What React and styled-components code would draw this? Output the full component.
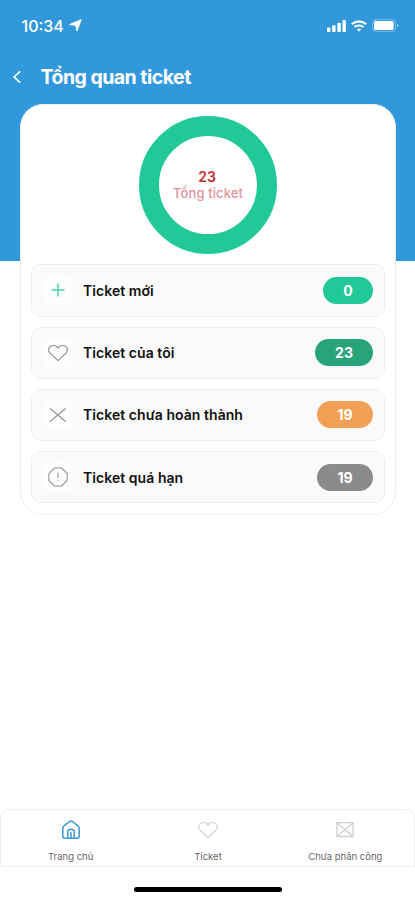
import React from "react";
import styled, { createGlobalStyle } from "styled-components";

const GlobalStyle = createGlobalStyle`
	* {
		box-sizing: border-box;
	}

	body {
		margin: 0;
		background: #fff;
		font-family: Inter, "Liberation Sans", sans-serif;
	}
`;

const Screen = styled.div`
	display: flex;
	flex-direction: column;
	height: 900px;
	overflow: hidden;
	background: #fff;
`;

const Header = styled.header`
	flex: none;
	height: 261px;
	background: #3298dc;
	color: #fff;
`;

const StatusBar = styled.div`
	display: flex;
	align-items: center;
	justify-content: space-between;
	height: 51px;
	padding: 0 16px 0 21.5px;
`;

const StatusGroup = styled.div`
	display: flex;
	align-items: center;
	gap: ${(props) => props.$gap}px;
`;

const Time = styled.span`
	font-size: 16px;
	font-weight: 500;
`;

const TitleBar = styled.div`
	display: flex;
	align-items: center;
	gap: 18.5px;
	height: 51px;
	padding-left: 12px;
`;

const Title = styled.h1`
	margin: 0;
	font-size: 19.5px;
	font-weight: 650;
	letter-spacing: -0.52px;
	white-space: nowrap;
`;

const Card = styled.main`
	flex: none;
	display: flex;
	flex-direction: column;
	align-items: center;
	height: 411px;
	margin: -157px 19px 0 20px;
	padding: 11px 10px 0;
	border: 1px solid #efefef;
	border-radius: 23px;
	background: #fff;
`;

const Donut = styled.div`
	display: flex;
	flex-direction: column;
	align-items: center;
	justify-content: center;
	width: 138px;
	height: 138px;
	border: 20px solid #20c997;
	border-radius: 50%;
	white-space: nowrap;
`;

const Total = styled.div`
	margin-right: 2px;
	font-size: 14px;
	font-weight: 600;
	line-height: 17px;
	color: #c9292f;
`;

const TotalLabel = styled.div`
	font-size: 13px;
	font-weight: 500;
	letter-spacing: 0.12px;
	line-height: 17px;
	color: #e0949a;
`;

const List = styled.div`
	display: flex;
	flex-direction: column;
	gap: 10px;
	width: 354px;
	margin-top: 10.4px;
`;

const Row = styled.div`
	display: flex;
	align-items: center;
	height: 52.2px;
	padding: 0 11px 0 10.5px;
	border: 1px solid #eeeeee;
	border-radius: 10px;
	background: #fafafa;
`;

const IconBox = styled.div`
	display: flex;
	align-items: center;
	justify-content: center;
	width: 30px;
	height: 30px;
	border-radius: 8px;
	background: #fdfdfd;
	color: ${(props) => props.$color};
`;

const RowLabel = styled.span`
	flex: 1;
	margin-left: 10.5px;
	font-size: 14px;
	font-weight: 600;
	letter-spacing: 0.05px;
	color: #111;
`;

const Badge = styled.span`
	width: ${(props) => props.$width}px;
	height: 27px;
	border-radius: 14px;
	background: ${(props) => props.$color};
	color: #fff;
	font-size: 14px;
	font-weight: 700;
	line-height: 27px;
	text-align: center;
`;

const Nav = styled.nav`
	flex: none;
	display: flex;
	height: 58px;
	margin-top: auto;
	padding-left: 1px;
	border: 1px solid #ededed;
	border-radius: 9px 9px 0 0;
`;

const NavItem = styled.div`
	flex: 1;
	display: flex;
	flex-direction: column;
	align-items: center;
	padding-top: 10px;
	color: ${(props) => props.$color};
`;

const NavLabel = styled.span`
	margin-top: 10px;
	font-size: 9.5px;
	line-height: 14px;
	color: #666;
`;

const HomeArea = styled.div`
	flex: none;
	display: flex;
	justify-content: center;
	height: 33px;
	padding-top: 20px;
`;

const HomeBar = styled.div`
	width: 148px;
	height: 5px;
	border-radius: 3px;
	background: #000;
`;

const Svg = ({ size = 20, width = size, height = size, stroke = 1.3, box = "0 0 20 20", children }) => (
	<svg
		width={width}
		height={height}
		viewBox={box}
		fill="none"
		stroke="currentColor"
		strokeWidth={stroke}
		strokeLinecap="round"
		strokeLinejoin="round"
	>
		{children}
	</svg>
);

const LocationIcon = () => (
	<Svg width={13} height={13} box="0 0 13 13" stroke={1}>
		<path d="M12 1 8 12 6.8 6.4 1 5.6Z" fill="currentColor" />
	</Svg>
);

const SignalIcon = () => (
	<Svg width={19} height={12} box="0 0 19 12" stroke={0}>
		<g fill="currentColor">
			<rect x="0" y="7.5" width="3.4" height="4.5" rx="0.8" />
			<rect x="5.2" y="5.3" width="3.4" height="6.7" rx="0.8" />
			<rect x="10.4" y="2.8" width="3.4" height="9.2" rx="0.8" />
			<rect x="15.5" y="0" width="3.4" height="12" rx="0.8" />
		</g>
	</Svg>
);

const WifiIcon = () => (
	<Svg width={16} height={12} box="0 0 16 12" stroke={2}>
		<g strokeLinecap="butt">
			<path d="M.8 4.3C4.9.4 11.1.4 15.2 4.3" />
			<path d="M3.4 7.1C6 4.8 10 4.8 12.6 7.1" />
		</g>
		<path d="M8 11.6 5.8 9.4Q8 7.6 10.2 9.4Z" fill="currentColor" stroke="none" />
	</Svg>
);

const BatteryIcon = () => (
	<Svg width={27} height={13} box="0 0 27 13" stroke={1}>
		<rect x="0.6" y="0.6" width="22.8" height="11.8" rx="3" opacity="0.35" />
		<rect x="2" y="2" width="19.6" height="9" rx="1.6" fill="currentColor" stroke="none" />
		<path d="M25 4.7v3.6q1.4-.5 1.4-1.8T25 4.7Z" fill="currentColor" stroke="none" opacity="0.5" />
	</Svg>
);

const BackIcon = () => (
	<Svg width={10} height={14} box="0 0 10 14" stroke={1.7}>
		<path d="M7.6 1.8 2 7l5.6 5.2" />
	</Svg>
);

const PlusIcon = () => (
	<Svg stroke={1.5}>
		<path d="M10 4v12M4 10h12" />
	</Svg>
);

const HeartIcon = () => (
	<Svg>
		<path d="M10 17.6 2.2 10.2C-.1 7.9.3 4.7 2.6 3.3 5.2 1.8 8.3 2.6 10 5c1.7-2.4 4.8-3.2 7.4-1.7 2.3 1.4 2.7 4.6.4 6.9Z" />
	</Svg>
);

const CrossIcon = () => (
	<Svg>
		<path d="M2.3 3.8 17.3 16.2M17.3 3.8 2.3 16.2" />
	</Svg>
);

const AlertIcon = () => (
	<Svg>
		<path d="M7.2.8h5.6q.6 0 1 .4l5 5q.4.4.4 1v5.6q0 .6-.4 1l-5 5q-.4.4-1 .4H7.2q-.6 0-1-.4l-5-5q-.4-.4-.4-1V7.2q0-.6.4-1l5-5q.4-.4 1-.4Z" />
		<path d="M10 6.2v4.4M10 13.3v.3" />
	</Svg>
);

const HomeIcon = () => (
	<Svg stroke={1.5}>
		<path d="M1.8 8.1Q1.8 6.7 3 5.9l5.6-4.4Q10 .6 11.4 1.5L17 5.9q1.2.8 1.2 2.2v8.2q0 2-2 2H3.8q-2 0-2-2Z" />
		<path d="M6.8 18v-6.5q0-1.9 1.9-1.9h2.6q1.9 0 1.9 1.9V18M10 12.8V18" />
	</Svg>
);

const BoxIcon = () => (
	<Svg>
		<rect x="2" y="2.7" width="16" height="13.8" />
		<path d="m2 2.7 16 13.8M18 2.7l-16 13.8" />
	</Svg>
);

const rows = [
	{ label: "Ticket mới", count: 0, color: "#20c997", width: 50, icon: PlusIcon, iconColor: "#4fd3a6" },
	{ label: "Ticket của tôi", count: 23, color: "#29a37a", width: 58, icon: HeartIcon, iconColor: "#999" },
	{ label: "Ticket chưa hoàn thành", count: 19, color: "#f2a154", width: 56, icon: CrossIcon, iconColor: "#999" },
	{ label: "Ticket quá hạn", count: 19, color: "#8b8b8b", width: 56, icon: AlertIcon, iconColor: "#a3a3a3" },
];

const tabs = [
	{ label: "Trang chủ", icon: HomeIcon, color: "#3b98d3" },
	{ label: "Ticket", icon: HeartIcon, color: "#d2d2d2" },
	{ label: "Chưa phân công", icon: BoxIcon, color: "#cfcfcf" },
];

const App = () => {
	return (
		<Screen>
			<GlobalStyle />
			<Header>
				<StatusBar>
					<StatusGroup $gap={5}>
						<Time>10:34</Time>
						<LocationIcon />
					</StatusGroup>
					<StatusGroup $gap={5}>
						<SignalIcon />
						<WifiIcon />
						<BatteryIcon />
					</StatusGroup>
				</StatusBar>
				<TitleBar>
					<BackIcon />
					<Title>Tổng quan ticket</Title>
				</TitleBar>
			</Header>
			<Card>
				<Donut>
					<Total>23</Total>
					<TotalLabel>Tổng ticket</TotalLabel>
				</Donut>
				<List>
					{rows.map(({ label, count, color, width, icon: Icon, iconColor }) => (
						<Row key={label}>
							<IconBox $color={iconColor}>
								<Icon />
							</IconBox>
							<RowLabel>{label}</RowLabel>
							<Badge $color={color} $width={width}>
								{count}
							</Badge>
						</Row>
					))}
				</List>
			</Card>
			<Nav>
				{tabs.map(({ label, icon: Icon, color }) => (
					<NavItem key={label} $color={color}>
						<Icon />
						<NavLabel>{label}</NavLabel>
					</NavItem>
				))}
			</Nav>
			<HomeArea>
				<HomeBar />
			</HomeArea>
		</Screen>
	);
};

export default App;
